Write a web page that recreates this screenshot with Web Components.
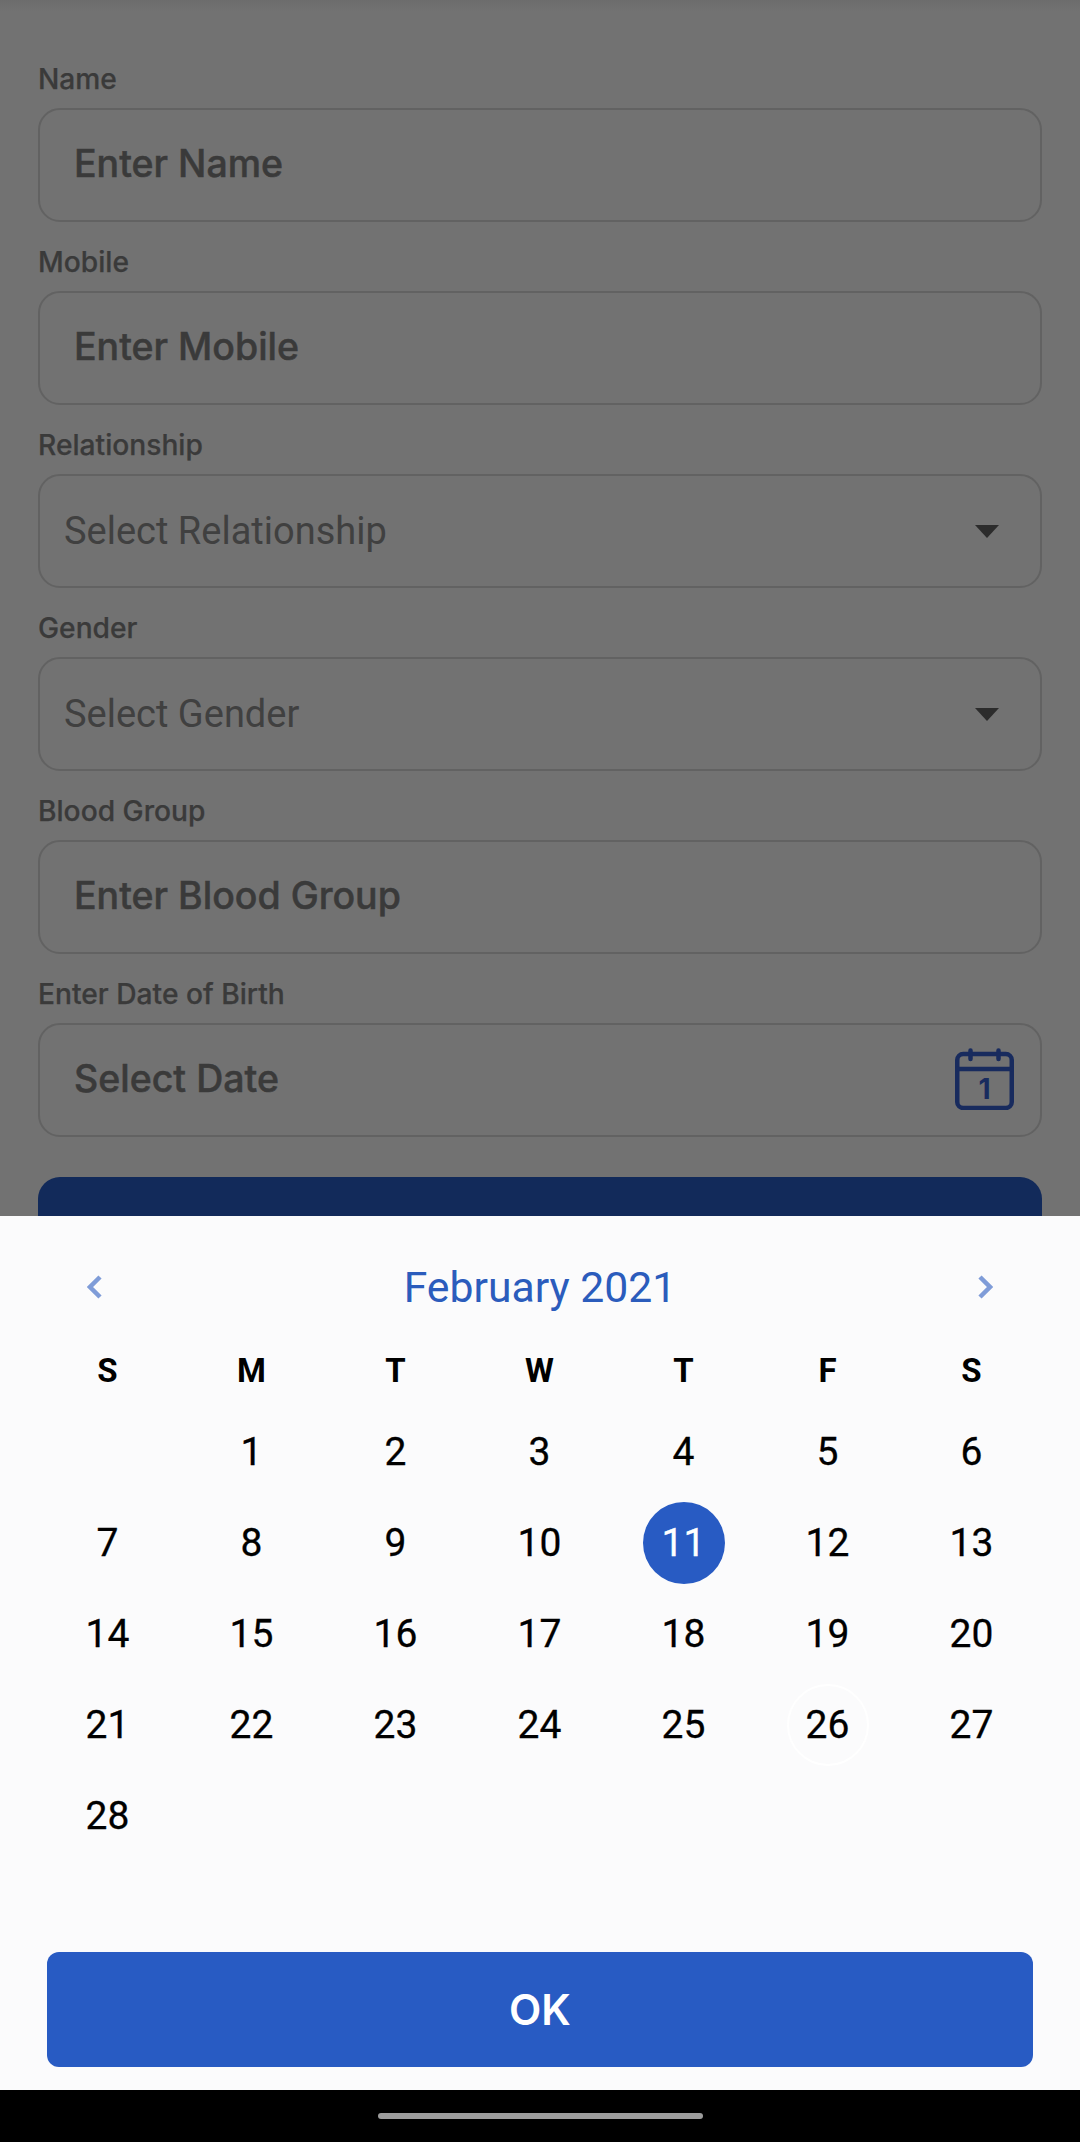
<!DOCTYPE html>
<html>
<head>
<meta charset="utf-8">
<title>Date picker</title>
<style>
  html, body { margin: 0; padding: 0; background: #727272; }
</style>
</head>
<body>
<app-screen>
  <member-form slot="form">
    <form-field label="Name" placeholder="Enter Name"></form-field>
    <form-field label="Mobile" placeholder="Enter Mobile"></form-field>
    <form-field label="Relationship" placeholder="Select Relationship" kind="select"></form-field>
    <form-field label="Gender" placeholder="Select Gender" kind="select"></form-field>
    <form-field label="Blood Group" placeholder="Enter Blood Group"></form-field>
    <form-field label="Enter Date of Birth" placeholder="Select Date">
      <svg slot="icon" width="59" height="62" viewBox="0 0 59 62" fill="none" stroke="#182b5e" stroke-width="4.500" stroke-linecap="round">
        <rect x="2.250" y="6" width="54.500" height="54" rx="6"/>
        <path d="M2 21H57M15.500 2.500V11M43.500 2.500V11"/>
        <text x="29.500" y="51" text-anchor="middle" font-family="Inter, sans-serif" font-size="28" font-weight="700" fill="#182b5e" stroke="none">1</text>
      </svg>
    </form-field>
  </member-form>
  <date-sheet slot="sheet" month="February 2021" first="1" days="28" selected="11" today="26"></date-sheet>
  <nav-bar slot="nav"></nav-bar>
</app-screen>

<script>
customElements.define('app-screen', class extends HTMLElement {
  constructor(){ super(); this.attachShadow({mode:'open'}); }
  connectedCallback(){
    this.shadowRoot.innerHTML = `
    <style>
      :host{ display:flex; flex-direction:column; width:1080px; height:2142px; overflow:hidden; }
      .top{ height:1216px; overflow:hidden; flex:none; }
      .bottom{ flex:1; display:flex; }
    </style>
    <div class="top"><slot name="form"></slot></div>
    <div class="bottom"><slot name="sheet"></slot></div>
    <slot name="nav"></slot>`;
  }
});

customElements.define('member-form', class extends HTMLElement {
  constructor(){ super(); this.attachShadow({mode:'open'}); }
  connectedCallback(){
    this.shadowRoot.innerHTML = `
    <style>
      :host{
        display:block; height:1216px; box-sizing:border-box;
        padding:63px 38px 0;
        background:linear-gradient(#6c6c6c 0, #727272 12px);
      }
      .fields{ display:flex; flex-direction:column; gap:24px; }
      .submit{ height:113px; margin-top:40px; border-radius:22px; background:#122a5a; }
    </style>
    <div class="fields"><slot></slot></div>
    <div class="submit"></div>`;
  }
});

customElements.define('form-field', class extends HTMLElement {
  constructor(){ super(); this.attachShadow({mode:'open'}); }
  connectedCallback(){
    const select = this.getAttribute('kind') === 'select';
    this.shadowRoot.innerHTML = `
    <style>
      :host{ display:block; }
      *{ box-sizing:border-box; }
      label{
        display:block; height:32px; margin-bottom:13px;
        font:500 28.200px/33px Inter, sans-serif; color:#3a3a3a; -webkit-text-stroke:.25px #3a3a3a;
      }
      .box{
        display:flex; align-items:center; justify-content:space-between;
        height:114px; padding:0 26px 0 34px;
        border:2.500px solid #626262; border-radius:22px;
      }
      .ph{ font:500 37.500px/40px Inter, sans-serif; color:#3a3a3a; -webkit-text-stroke:.5px #3a3a3a; margin-top:-3px; }
      .box.select{ padding:0 41px 0 24px; }
      .select .ph{ font:400 38px/40px Roboto, sans-serif; color:#404040; -webkit-text-stroke:0; margin-top:-1px; }
      .arrow{ width:0; height:0; margin-top:1px; border:12px solid transparent; border-top:13px solid #2c2c2c; border-bottom:0; }
      ::slotted(svg){ display:block; margin-top:-2px; }
    </style>
    <label>${this.getAttribute('label')}</label>
    <div class="box ${select ? 'select' : ''}">
      <span class="ph">${this.getAttribute('placeholder')}</span>
      ${select ? '<span class="arrow"></span>' : '<slot name="icon"></slot>'}
    </div>`;
  }
});

customElements.define('date-sheet', class extends HTMLElement {
  constructor(){ super(); this.attachShadow({mode:'open'}); }
  connectedCallback(){
    const first = +this.getAttribute('first');
    const days = +this.getAttribute('days');
    const selected = +this.getAttribute('selected');
    const today = +this.getAttribute('today');
    let cells = '';
    for(let i = 0; i < first; i++) cells += '<div class="day"></div>';
    for(let d = 1; d <= days; d++){
      const cls = d === selected ? ' selected' : d === today ? ' today' : '';
      cells += `<div class="day"><span class="num${cls}">${d}</span></div>`;
    }
    const heads = ['S','M','T','W','T','F','S'].map(w => `<div class="wd">${w}</div>`).join('');
    this.shadowRoot.innerHTML = `
    <style>
      :host{ display:flex; flex-direction:column; flex:1; box-sizing:border-box; background:#fbfbfc; padding-bottom:23px; font-family:Roboto, sans-serif; }
      *{ box-sizing:border-box; }
      header{
        display:flex; align-items:center; justify-content:space-between;
        height:62px; margin-top:40px; padding:0 87px;
        font-size:42.700px; color:#2b5cbc;
      }
      header svg{ display:block; }
      .week, .grid{ display:grid; grid-template-columns:repeat(7, 144px); margin-left:35.500px; }
      .week{ height:46px; margin-top:30px; margin-bottom:12px; }
      .wd{ text-align:center; font:700 33px/46px Roboto, sans-serif; color:#000; }
      .grid{ grid-auto-rows:91px; }
      .day{ display:flex; align-items:center; justify-content:center; }
      .num{
        display:flex; align-items:center; justify-content:center;
        width:82px; height:82px; border-radius:50%;
        font-size:39px; color:#000; -webkit-text-stroke:.3px currentColor;
      }
      .num.selected{ background:#285bc3; color:#fff; }
      .num.today{ border:2.500px solid #fff; }
      .ok{
        margin:auto 47px 0; height:115px; border-radius:12px; background:#285bc3;
        display:flex; align-items:center; justify-content:center;
        font:600 42px Inter, sans-serif; color:#fff;
      }
    </style>
    <header>
      <svg width="15" height="24" viewBox="0 0 15 24" fill="none" stroke="#7f9cd8" stroke-width="4.500"><path d="M13 2L3 12L13 22"/></svg>
      <span>${this.getAttribute('month')}</span>
      <svg width="15" height="24" viewBox="0 0 15 24" fill="none" stroke="#7f9cd8" stroke-width="4.500"><path d="M2 2L12 12L2 22"/></svg>
    </header>
    <div class="week">${heads}</div>
    <div class="grid">${cells}</div>
    <div class="ok">OK</div>`;
  }
});

customElements.define('nav-bar', class extends HTMLElement {
  constructor(){ super(); this.attachShadow({mode:'open'}); }
  connectedCallback(){
    this.shadowRoot.innerHTML = `
    <style>
      :host{ display:flex; justify-content:center; align-items:flex-start; height:52px; background:#000; flex:none; }
      i{ display:block; width:325px; height:6px; margin-top:23px; border-radius:3px; background:#9c9c9c; }
    </style>
    <i></i>`;
  }
});
</script>
</body>
</html>
